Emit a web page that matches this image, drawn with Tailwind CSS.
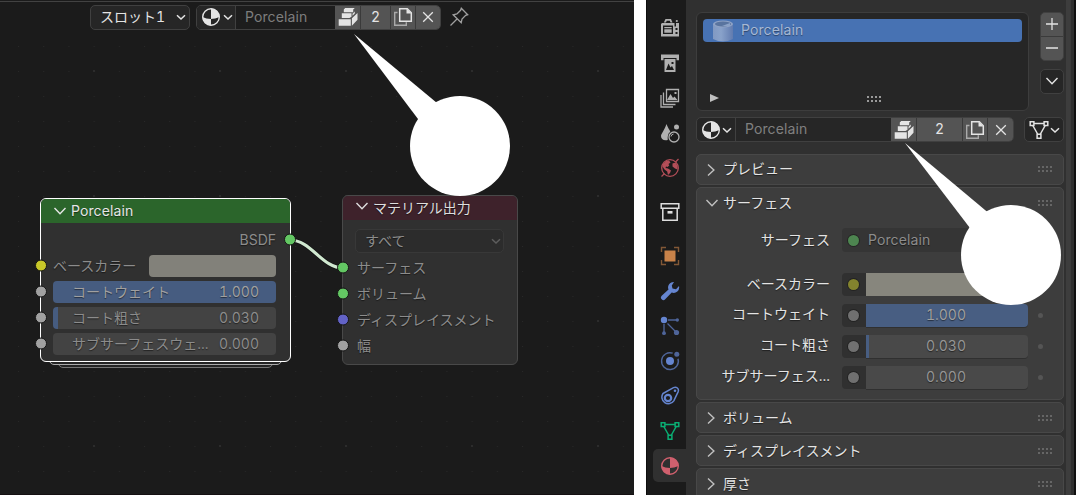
<!DOCTYPE html>
<html lang="ja">
<head>
<meta charset="utf-8">
<title>Shader Editor</title>
<script src="https://cdn.jsdelivr.net/npm/@tailwindcss/browser@4"></script>
</head>
<body class="relative flex h-[495px] w-[1076px] overflow-hidden bg-white font-[Inter,'Noto_Sans_CJK_JP',sans-serif] text-[14px] leading-5 text-[#e4e4e4] tabular-nums">

<svg class="hidden">
  <symbol id="down" viewBox="0 0 12 12"><path d="M2 4.200 6 8l4-3.800" fill="none" stroke="currentColor" stroke-width="1.500"/></symbol>
  <symbol id="right" viewBox="0 0 12 16"><path d="M3 2.500 8.900 8 3 13.500" fill="none" stroke="currentColor" stroke-width="1.400"/></symbol>
  <symbol id="open" viewBox="0 0 14 12"><path d="M1.500 3 7 8.700 12.500 3" fill="none" stroke="currentColor" stroke-width="1.400"/></symbol>
  <symbol id="material" viewBox="0 0 20 20"><circle cx="10" cy="10" r="8.300" fill="none" stroke="currentColor" stroke-width="1.400"/><path d="M10 1.500A8.500 8.500 0 0 1 18.500 10Q14 12 10 12ZM10 12V18.500A8.500 8.500 0 0 1 1.500 10Q5 12 10 12Z" fill="currentColor"/></symbol>
  <symbol id="pack" viewBox="0 0 20 20"><g fill="currentColor"><path d="M7.200 1h9.600l-1.600 1.600v2.600H5.800V2.600zM3.800 6.200h9.700v3.600l-2 1.300H3.800zM14.500 6.800 16.800 4.500v2L14.500 8.800zM.7 12.200h12.100v6.600H.7zM13.900 11.300 19.500 6v6.800l-5.600 6z"/></g></symbol>
  <symbol id="dup" viewBox="0 0 20 20"><path d="M4.500 5.500H1.700v12.800h11.600v-3" fill="none" stroke="currentColor" stroke-width="1.400" opacity=".6"/><path d="M6.700 1.700h7.600l4 4v8.600H6.700z" fill="none" stroke="currentColor" stroke-width="1.500"/><path d="M13.500 1.500v5h5z" fill="currentColor"/></symbol>
  <symbol id="close" viewBox="0 0 12 12"><path d="M1.200 1.200 10.800 10.800M10.800 1.200 1.200 10.800" stroke="currentColor" stroke-width="1.300"/></symbol>
  <symbol id="mesh" viewBox="0 0 20 20"><g fill="none" stroke="currentColor" stroke-width="1.500"><path d="M5 3.500h10M3.800 5.500 8.600 14M16.200 5.500 11.400 14"/><path d="M1.200 1.700h3.700v3.700H1.200zM15.100 1.700h3.700v3.700h-3.700zM8.100 14.300h3.800v3.900H8.100z"/></g></symbol>
  <symbol id="grip" viewBox="0 0 15 7"><g fill="currentColor"><path d="M0 0h2v2H0zM4 0h2v2H4zM8 0h2v2H8zM12 0h2v2h-2zM0 4h2v2H0zM4 4h2v2H4zM8 4h2v2H8zM12 4h2v2h-2z"/></g></symbol>
</svg>

<!-- Node editor -->
<main class="relative h-full w-[633.5px] shrink-0 overflow-hidden bg-[#1b1b1b]">
  <svg class="absolute inset-0 h-full w-full">
    <defs>
      <pattern id="minor" x="18" y="21" width="25.200" height="25" patternUnits="userSpaceOnUse"><rect width="1" height="1" x="0" y="0" fill="#282828"/></pattern>
      <pattern id="major" x="93" y="70" width="126" height="125" patternUnits="userSpaceOnUse"><rect width="2" height="2" fill="#2c2c2c"/></pattern>
    </defs>
    <rect y="35" width="634" height="460" fill="url(#minor)"/><rect y="35" width="634" height="460" fill="url(#major)"/>
    <rect y="1" width="634" height="1" fill="#424242"/><rect y="494" width="634" height="1" fill="#151012"/>
  </svg>

  <header class="relative flex h-[34px] items-center pl-[90px]">
    <div class="flex h-[25px] w-[100px] items-center justify-between rounded-[5px] border border-[#404040] bg-[#262626] pr-0.5 pl-[9px]"><span>スロット1</span><svg class="size-3"><use href="#down"/></svg></div>
    <div class="ml-1.5 flex h-[25px] w-[245px] overflow-hidden rounded-[5px] border border-[#404040] bg-[#1d1d1d]">
      <div class="flex w-[39px] items-center border-r border-[#404040] bg-[#262626] pl-1"><svg class="size-5"><use href="#material"/></svg><svg class="ml-px size-3"><use href="#down"/></svg></div>
      <div class="w-[99px] pl-[9px] leading-[22px] tracking-[.1px] text-[#7d7d7d]">Porcelain</div>
      <div class="flex w-[26px] items-center justify-center border-r border-[#3a3a3a] bg-[#545454]"><svg class="size-5"><use href="#pack"/></svg></div>
      <div class="w-[30px] border-r border-[#3a3a3a] bg-[#545454] text-center leading-[22px]">2</div>
      <div class="flex w-[25px] items-center justify-center border-r border-[#3a3a3a] bg-[#545454]"><svg class="size-5"><use href="#dup"/></svg></div>
      <div class="flex flex-1 items-center justify-center bg-[#545454]"><svg class="size-3"><use href="#close"/></svg></div>
    </div>
    <svg class="ml-2 size-5 text-[#a0a0a0]" viewBox="0 0 20 20" fill="none" stroke="currentColor" stroke-width="1.300"><path d="m12.300 1.300 6.400 6.400-2 .7-3.700 3.700-.8 3.700-8-8 3.700-.8 3.700-3.700zM8 12l-6.500 6.500"/></svg>
  </header>

  <!-- Collapsed stack behind the group node -->
  <div class="absolute top-[350px] left-[58px] h-[18px] w-[215px] rounded-[5px] border border-[#777] bg-[#242424]"></div>
  <div class="absolute top-[350px] left-[49px] h-[15px] w-[233px] rounded-[5px] border border-[#aaa] bg-[#242424]"></div>

  <section class="absolute top-[198px] left-[40px] h-[164px] w-[251px] overflow-hidden rounded-md border border-white bg-[#303030] text-[#8c8c8c] [text-shadow:0_1px_1px_rgba(0,0,0,.5)]">
    <div class="flex h-6 items-center bg-[#2b652b] pl-3 text-[#e6e6e6]"><svg class="h-3 w-3.5"><use href="#open"/></svg><span class="ml-1 tracking-[.1px]">Porcelain</span></div>
    <div class="flex flex-col gap-1 pt-1.5 pr-3.5 pl-3">
      <div class="h-[22px] text-right leading-[22px]">BSDF</div>
      <div class="flex h-[22px] items-center justify-between"><span>ベースカラー</span><div class="h-[22px] w-[127px] rounded bg-[#82817a]"></div></div>
      <div class="flex h-[22px] items-center justify-between rounded bg-[#465c80] pr-[17px] pl-[19px] text-[#a0a0a0]"><span>コートウェイト</span><span>1.000</span></div>
      <div class="flex h-[22px] items-center justify-between rounded bg-[#434343] bg-linear-to-r from-[#465c80] from-[5px] to-[#434343] to-[5px] pr-[17px] pl-[19px]"><span>コート粗さ</span><span>0.030</span></div>
      <div class="flex h-[22px] items-center justify-between rounded bg-[#434343] pr-[17px] pl-[19px]"><span>サブサーフェスウェ...</span><span>0.000</span></div>
    </div>
  </section>

  <section class="absolute top-[195px] left-[342px] h-[170px] w-[176px] overflow-hidden rounded-md border border-[#494949] bg-[#303030] text-[#8c8c8c] [text-shadow:0_1px_1px_rgba(0,0,0,.5)]">
    <div class="flex h-6 items-center bg-[#3e222b] pl-3 text-[#dedede]"><svg class="mb-1 h-3 w-3.5"><use href="#open"/></svg><span class="ml-1">マテリアル出力</span></div>
    <div class="mx-3 mt-[9px] flex h-6 w-[149px] items-center justify-between rounded-[5px] border border-[#383838] bg-[#2c2c2c] pr-px pl-[9px]"><span>すべて</span><svg class="size-3 text-[#5d5d5d]"><use href="#down"/></svg></div>
    <div class="mt-0.5 flex flex-col pl-3.5 leading-[26px]"><span>サーフェス</span><span>ボリューム</span><span>ディスプレイスメント</span><span>幅</span></div>
  </section>

  <svg class="absolute inset-0 h-full w-full">
    <path d="M290 240C311 240 322 268 343 268" fill="none" stroke="#111" stroke-width="4.500"/><path d="M290 240C311 240 322 268 343 268" fill="none" stroke="#d0e8d0" stroke-width="3"/>
    <g stroke="#151515" stroke-width="1"><g fill="#63c763"><circle cx="290" cy="239.500" r="5.500"/><circle cx="343" cy="267.500" r="5.500"/><circle cx="343" cy="293.500" r="5.500"/></g><circle cx="343" cy="319.500" r="5.500" fill="#6363c7"/><circle cx="41" cy="265.500" r="5.500" fill="#c7c729"/><g fill="#a1a1a1"><circle cx="343" cy="345.500" r="5.500"/><circle cx="41" cy="291.500" r="5.500"/><circle cx="41" cy="317.500" r="5.500"/><circle cx="41" cy="343.500" r="5.500"/></g></g>
  </svg>
</main>

<!-- Properties editor -->
<aside class="ml-3 flex h-full flex-1 overflow-hidden border-l border-[#0d0d0d] bg-[#1b1b1b]">
  <nav class="flex w-[39.500px] shrink-0 flex-col items-end pt-[10px]">
    <div class="flex flex-col text-[#b0b0b0]">
      <div class="flex h-[35px] w-[33px] items-center justify-center"><svg class="size-5" viewBox="0 0 20 20" fill="currentColor"><path d="M5.500 1h5.500l1.500 3.500h-2L9.800 2.800H6.700L6 4.500H3.800z"/><circle cx="16.800" cy="3" r="1.100"/><path fill-rule="evenodd" d="M2 5h12.500v3.500H16V5h3v13.500H1V6zM3 7.500V16h10V7.500zM15.500 10v2h2v-2zM15.500 14v2h2v-2z"/><path d="M4.300 9h7.400v1.300H4.300zM4.300 11.300h7.400v3.500H4.300z"/></svg></div>
      <div class="flex h-[35px] w-[33px] items-center justify-center"><svg class="size-5" viewBox="0 0 20 20" fill="currentColor"><path d="M1 1.500h18v5.700h-2.500V5h-13v2.200H1z"/><path fill-rule="evenodd" d="M4.500 6h11v13h-11zM6 17h8l-2-4-1.500 1.500-2-4zM11.500 9v2h2V9z"/></svg></div>
      <div class="flex h-[35px] w-[33px] items-center justify-center"><svg class="size-5" viewBox="0 0 20 20" fill="none" stroke="currentColor" stroke-width="1.300"><path d="M1 7v12h12M3.500 4.500v12h12"/><path d="M6.500 1.500h12v12h-12z"/><path d="m7 12 3.500-6 2.500 4 1.500-1.500 3 3.500zM14.500 4h2v2h-2z" fill="currentColor" stroke="none"/></svg></div>
      <div class="flex h-[35px] w-[33px] items-center justify-center"><svg class="size-5" viewBox="0 0 20 20" fill="currentColor"><path d="M6.500 1C8 5.500 10 7 10.300 9C8 10 7.500 13 7.700 17C3.500 18 1 16 1 13c0-2 4-7 5.500-12z"/><circle cx="16.500" cy="4" r="2.500"/><circle cx="14" cy="14" r="5" fill="none" stroke="currentColor" stroke-width="1.300"/><path d="M11 13.500a3 3 0 0 1 2.500-2.500" fill="none" stroke="currentColor"/></svg></div>
      <div class="flex h-[35px] w-[33px] items-center justify-center text-[#b34e58]"><svg class="size-5" viewBox="0 0 20 20" fill="currentColor"><circle cx="10" cy="10" r="8.300" fill="none" stroke="currentColor" stroke-width="1.300"/><path d="m15.500 4 3-3M1.500 18.500l3-3" stroke="currentColor" stroke-width="1.300"/><path d="M3 6 6 3l3-.5 1.500 2L8.500 6l.8 1.500L7.500 9 6 8.500 5.500 10l2.500.5 3 2L10 15l-2 2-.8-3.500-2.700-2-2-3zM12.500 5.500l3-1 2 3v4L15 10.500l-2.500-2z"/></svg></div>
    </div>
    <div class="mt-[9px] flex h-[35px] w-[33px] items-center justify-center text-[#dedede]"><svg class="size-5" viewBox="0 0 20 20" fill="none" stroke="currentColor" stroke-width="1.500"><path d="M1.200 1.700h17.600v4.600H1.200zM2.800 6.500v11.700h14.400V6.500"/><path d="M7.500 10.300h5" stroke-width="2.600"/></svg></div>
    <div class="mt-[9px] flex flex-col text-[#6585d0]">
      <div class="flex h-[35px] w-[33px] items-center justify-center text-[#c88249]"><svg class="size-5" viewBox="0 0 20 20"><path d="M4.500 4.500h11v11h-11z" fill="currentColor"/><path d="M1.500 6V1.500H6M14 1.500h4.500V6M18.500 14v4.500H14M6 18.500H1.500V14" fill="none" stroke="currentColor" stroke-width="1.400" opacity=".6"/></svg></div>
      <div class="flex h-[35px] w-[33px] items-center justify-center"><svg class="size-5" viewBox="0 0 20 20" fill="currentColor"><path d="M14 1a5.400 5.400 0 0 0-5.500 7.500L1.700 14.800a2.400 2.400 0 1 0 3.500 3.500l6.500-6.800A5.500 5.500 0 0 0 19 5l-3 3.200-3.500-.7-.7-3z"/></svg></div>
      <div class="flex h-[35px] w-[33px] items-center justify-center"><svg class="size-5" viewBox="0 0 20 20" fill="currentColor"><circle cx="4" cy="4" r="3.200"/><g opacity=".7"><circle cx="17.300" cy="4" r="1.700"/><circle cx="4" cy="17.200" r="1.900"/><circle cx="16.500" cy="16.500" r="2.600"/><path d="M8 4h9M4 8v9M7.500 7.500l9 9" stroke="currentColor" stroke-width="1.300"/></g></svg></div>
      <div class="flex h-[35px] w-[33px] items-center justify-center"><svg class="size-5" viewBox="0 0 20 20" fill="currentColor"><circle cx="10" cy="10" r="4"/><g opacity=".7"><circle cx="16.800" cy="3.200" r="2.500"/><path d="M12.700 2.200a8.400 8.400 0 1 0 5.300 5.500" fill="none" stroke="currentColor" stroke-width="1.400"/></g></svg></div>
      <div class="flex h-[35px] w-[33px] items-center justify-center"><svg class="size-5" viewBox="0 0 20 20" fill="none" stroke="currentColor" stroke-width="1.500"><path d="M3 7.500 13.500 1.600c3-1.200 5.700 1 4.700 4l-4.400 9.200A6.500 6.500 0 1 1 3 7.500z"/><circle cx="8" cy="12" r="3.200" stroke-width="2.200"/><circle cx="15" cy="4.800" r="1.300" fill="currentColor" stroke="none"/></svg></div>
      <div class="flex h-[35px] w-[33px] items-center justify-center text-[#0aae73]"><svg class="size-5"><use href="#mesh"/></svg></div>
      <div class="mt-px flex h-[33px] w-[33px] items-center justify-center rounded-l-[5px] bg-[#303030] text-[#d0606e]"><svg class="size-5"><use href="#material"/></svg></div>
    </div>
  </nav>

  <div class="flex w-[380px] shrink-0 flex-col bg-[#303030] pt-[12px] pl-2.5">
    <div class="flex gap-[11px]">
      <div class="flex h-[99px] w-[333px] flex-col justify-between rounded-md border border-[#3d3d3d] bg-[#262626] p-[6px]">
        <div class="flex h-[23px] items-center rounded bg-[#4772b3] pl-2.5 text-[#a6b8d4] [text-shadow:0_1px_1px_rgba(0,0,0,.4)]">
          <svg class="h-[22px] w-5" viewBox="0 0 20 22"><defs><linearGradient id="cup"><stop stop-color="#8199c2"/><stop offset=".4" stop-color="#89a2ca"/><stop offset="1" stop-color="#617baf"/></linearGradient></defs><path d="M0 4v15q10 5 20 0V4z" fill="url(#cup)"/><ellipse cx="10" cy="4" rx="10" ry="3.500" fill="#8fa3c6"/><ellipse cx="10" cy="4" rx="8" ry="2.500" fill="#59749f"/><path d="M9 6 17 3v3z" fill="#8ba2c7"/></svg>
          <span class="mb-0.5 ml-2 tracking-[.1px]">Porcelain</span>
        </div>
        <div class="flex h-3 items-center text-[#9a9a9a]"><svg class="ml-[7px] h-2 w-[9px]" viewBox="0 0 9 8"><path d="M0 0 9 4 0 8z" fill="#c0c0c0"/></svg><svg class="mt-0.5 ml-[148px] h-[7px] w-[15px]"><use href="#grip"/></svg></div>
      </div>
      <div class="flex flex-col">
        <div class="flex h-[49px] w-6 flex-col overflow-hidden rounded-[5px] border border-[#404040] bg-[#545454]">
          <div class="flex h-6 items-center justify-center border-b border-[#3b3b3b]"><svg class="size-3" viewBox="0 0 12 12"><path d="M6 0v12M0 6h12" stroke="currentColor" stroke-width="1.300"/></svg></div>
          <div class="flex h-6 items-center justify-center"><svg class="size-3" viewBox="0 0 12 12"><path d="M0 6h12" stroke="currentColor" stroke-width="1.300"/></svg></div>
        </div>
        <div class="mt-2 flex h-[25px] w-6 items-center justify-center rounded-[5px] border border-[#404040] bg-[#262626]"><svg class="mb-px h-3 w-3.5"><use href="#open"/></svg></div>
      </div>
    </div>

    <div class="mt-1.5 flex">
      <div class="flex h-[25px] w-[318px] shrink-0 overflow-hidden rounded-[5px] border border-[#404040] bg-[#262626]">
        <div class="flex w-[39px] items-center border-r border-[#404040] pl-[4px]"><svg class="size-5"><use href="#material"/></svg><svg class="size-3"><use href="#down"/></svg></div>
        <div class="w-[155px] pl-[9px] leading-[22px] tracking-[.1px] text-[#808080]">Porcelain</div>
        <div class="flex w-[26px] items-center justify-center border-r border-[#3a3a3a] bg-[#545454]"><svg class="size-5"><use href="#pack"/></svg></div>
        <div class="w-[46px] border-r border-[#3a3a3a] bg-[#545454] text-center leading-[22px]">2</div>
        <div class="flex w-[25px] items-center justify-center border-r border-[#3a3a3a] bg-[#545454]"><svg class="size-5"><use href="#dup"/></svg></div>
        <div class="flex flex-1 items-center justify-center bg-[#545454]"><svg class="size-3"><use href="#close"/></svg></div>
      </div>
      <div class="ml-2.5 flex h-[25px] w-10 items-center rounded-[5px] border border-[#404040] bg-[#262626] pl-1"><svg class="size-5"><use href="#mesh"/></svg><svg class="size-3"><use href="#down"/></svg></div>
    </div>

    <div class="mt-3 flex w-[368px] shrink-0 flex-col gap-0.5 [text-shadow:0_1px_1px_rgba(0,0,0,.5)]">
      <div class="flex h-[31px] items-center rounded-[5px] border border-[#484848] bg-[#3d3d3d] pr-[10px] pl-2"><svg class="h-4 w-3 text-[#c0c0c0]"><use href="#right"/></svg><span class="mb-px ml-1.5 flex-1">プレビュー</span><svg class="h-[7px] w-[15px] text-[#666]"><use href="#grip"/></svg></div>
      <div class="flex h-[213px] flex-col rounded-[5px] border border-[#484848] bg-[#3d3d3d]">
        <div class="flex h-[29px] items-center pr-[10px] pl-2"><svg class="h-3 w-3.5 text-[#c0c0c0]"><use href="#open"/></svg><span class="ml-1 flex-1">サーフェス</span><svg class="mt-0.5 h-[7px] w-[15px] text-[#666]"><use href="#grip"/></svg></div>
        <div class="mt-[11px] flex h-6 items-center"><span class="w-[133px] text-right">サーフェス</span><div class="ml-3 flex h-6 w-[186px] items-center rounded bg-[#353535] pl-1.5 text-[#8c8c8c]"><i class="size-[11px] rounded-full bg-[#4d8550] shadow-[0_0_0_1px_#252525]"></i><span class="ml-[9px] tracking-[.1px]">Porcelain</span></div></div>
        <div class="mt-5 flex flex-col gap-[7px]">
          <div class="flex h-6 items-center"><span class="w-[133px] text-right">ベースカラー</span><div class="ml-3 flex h-[23px] w-6 items-center rounded-l bg-[#303030] pl-1.5"><i class="size-[11px] rounded-full bg-[#83832e] shadow-[0_0_0_1px_#222]"></i></div><div class="h-[23px] w-[162px] rounded-r bg-[#87867d]"></div></div>
          <div class="flex h-6 items-center"><span class="mb-0.5 w-[133px] text-right">コートウェイト</span><div class="ml-3 flex h-[23px] w-6 items-center rounded-l bg-[#303030] pl-1.5"><i class="size-[11px] rounded-full bg-[#707070] shadow-[0_0_0_1px_#222]"></i></div><div class="h-[23px] w-[162px] rounded-r bg-[#485e82] pr-0.5 text-center leading-[21px] text-[#a0a0a0] shadow-[0_1px_0_#303030]">1.000</div><i class="ml-[10px] size-[5px] rounded-full bg-[#555]"></i></div>
          <div class="flex h-6 items-center"><span class="mb-0.5 w-[133px] text-right">コート粗さ</span><div class="ml-3 flex h-[23px] w-6 items-center rounded-l bg-[#303030] pl-1.5"><i class="size-[11px] rounded-full bg-[#707070] shadow-[0_0_0_1px_#222]"></i></div><div class="h-[23px] w-[162px] rounded-r bg-linear-to-r from-[#485e82] from-[3px] to-[#494949] to-[3px] pr-0.5 text-center leading-[21px] text-[#959595] shadow-[0_1px_0_#303030]">0.030</div><i class="ml-[10px] size-[5px] rounded-full bg-[#555]"></i></div>
          <div class="flex h-6 items-center"><span class="mb-0.5 w-[133px] text-right">サブサーフェス...</span><div class="ml-3 flex h-[23px] w-6 items-center rounded-l bg-[#303030] pl-1.5"><i class="size-[11px] rounded-full bg-[#707070] shadow-[0_0_0_1px_#222]"></i></div><div class="h-[23px] w-[162px] rounded-r bg-[#494949] pr-0.5 text-center leading-[21px] text-[#959595] shadow-[0_1px_0_#303030]">0.000</div><i class="ml-[10px] size-[5px] rounded-full bg-[#555]"></i></div>
        </div>
      </div>
      <div class="flex h-[31px] items-center rounded-[5px] border border-[#484848] bg-[#3d3d3d] pr-[10px] pl-2"><svg class="h-4 w-3 text-[#c0c0c0]"><use href="#right"/></svg><span class="ml-1.5 flex-1">ボリューム</span><svg class="mt-0.5 h-[7px] w-[15px] text-[#666]"><use href="#grip"/></svg></div>
      <div class="flex h-[31px] items-center rounded-[5px] border border-[#484848] bg-[#3d3d3d] pr-[10px] pl-2"><svg class="h-4 w-3 text-[#c0c0c0]"><use href="#right"/></svg><span class="ml-1.5 flex-1">ディスプレイスメント</span><svg class="mt-0.5 h-[7px] w-[15px] text-[#666]"><use href="#grip"/></svg></div>
      <div class="flex h-[31px] items-center rounded-[5px] border border-[#484848] bg-[#3d3d3d] pr-[10px] pl-2"><svg class="h-4 w-3 text-[#c0c0c0]"><use href="#right"/></svg><span class="ml-1.5 flex-1">厚さ</span><svg class="mt-0.5 h-[7px] w-[15px] text-[#666]"><use href="#grip"/></svg></div>
    </div>
  </div>
  <div class="w-[5px] bg-[#3d3d3d]"></div><div class="w-[3px] bg-[#303030]"></div><div class="flex-1 bg-[#111]"></div>
</aside>

<!-- Callouts -->
<svg class="pointer-events-none absolute inset-0 h-full w-full" fill="#fff"><path d="M354 34 440 105.500 421 123z"/><circle cx="460" cy="146" r="50"/><path d="M905 143 991 215 973 232z"/><circle cx="1011" cy="255" r="50"/></svg>
</body>
</html>
